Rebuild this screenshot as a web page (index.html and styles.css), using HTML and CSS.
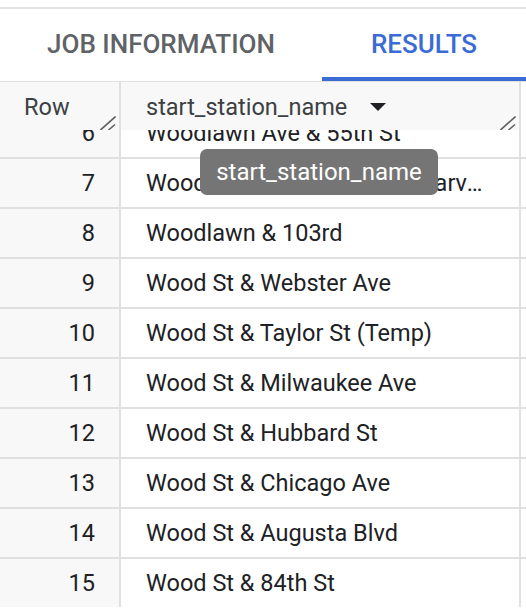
FILE: index.html
```html
<!DOCTYPE html>
<html lang="en">
<head>
<meta charset="utf-8">
<title>Results</title>
<link rel="stylesheet" href="styles.css">
</head>
<body>
<div class="page">
  <div class="topline"></div>
  <nav class="tabs">
    <div class="tab">Job information</div>
    <div class="tab active">Results</div>
  </nav>
  <div class="grid">
    <div class="head">
      <div class="hcell num-col">Row
        <svg class="resize" width="16" height="14" viewBox="0 0 16 14"><line x1="0.5" y1="14" x2="15.5" y2="0.5"/><line x1="8.5" y1="14" x2="15" y2="8.5"/></svg>
      </div>
      <div class="hcell name-col">
        <span>start_station_name</span>
        <svg class="sort" width="16" height="8" viewBox="0 0 16 8"><polygon points="0,0 16,0 8,8"/></svg>
        <svg class="resize" width="16" height="14" viewBox="0 0 16 14"><line x1="0.5" y1="14" x2="15.5" y2="0.5"/><line x1="8.5" y1="14" x2="15" y2="8.5"/></svg>
      </div>
    </div>
    <div class="body">
      <div class="rows">
        <div class="row"><div class="cell num-col">6</div><div class="cell name-col">Woodlawn Ave &amp; 55th St</div></div>
        <div class="row"><div class="cell num-col">7</div><div class="cell name-col">Woodlawn &amp; 103rd - Olive Harvey Vaccination Site</div></div>
        <div class="row"><div class="cell num-col">8</div><div class="cell name-col">Woodlawn &amp; 103rd</div></div>
        <div class="row"><div class="cell num-col">9</div><div class="cell name-col">Wood St &amp; Webster Ave</div></div>
        <div class="row"><div class="cell num-col">10</div><div class="cell name-col">Wood St &amp; Taylor St (Temp)</div></div>
        <div class="row"><div class="cell num-col">11</div><div class="cell name-col">Wood St &amp; Milwaukee Ave</div></div>
        <div class="row"><div class="cell num-col">12</div><div class="cell name-col">Wood St &amp; Hubbard St</div></div>
        <div class="row"><div class="cell num-col">13</div><div class="cell name-col">Wood St &amp; Chicago Ave</div></div>
        <div class="row"><div class="cell num-col">14</div><div class="cell name-col">Wood St &amp; Augusta Blvd</div></div>
        <div class="row"><div class="cell num-col">15</div><div class="cell name-col">Wood St &amp; 84th St</div></div>
      </div>
    </div>
  </div>
  <div class="tooltip">start_station_name</div>
</div>
</body>
</html>
```
FILE: styles.css
```css
html, body {
  margin: 0;
  padding: 0;
  background: #ffffff;
}
body {
  font-family: Roboto, "Liberation Sans", Arial, sans-serif;
  color: #202124;
  width: 526px;
  height: 608px;
  overflow: hidden;
}
.page {
  position: relative;
  width: 526px;
  height: 608px;
  overflow: hidden;
}
.topline {
  height: 7px;
  border-bottom: 2px solid #e3e3e3;
}
.tabs {
  display: flex;
  height: 72px;
  border-bottom: 1px solid #e0e0e0;
}
.tab {
  box-sizing: border-box;
  width: 322px;
  display: flex;
  align-items: center;
  justify-content: center;
  padding-top: 1px;
  font-size: 26px;
  font-weight: 500;
  text-transform: uppercase;
  color: #5f6368;
  border-bottom: 4px solid transparent;
}
.tab.active {
  width: 204px;
  color: #3b6bd5;
  border-bottom-color: #3b6bd5;
}
.grid {
  display: flex;
  flex-direction: column;
  height: 526px;
}
.head {
  display: flex;
  height: 48px;
  flex: none;
  position: relative;
  z-index: 1;
}
.hcell {
  position: relative;
  box-sizing: border-box;
  display: flex;
  align-items: center;
  background: #f8f8f8;
  border-right: 2px solid #e0e0e0;
  font-size: 23.5px;
  color: #3c4043;
  padding-top: 1px;
}
.num-col {
  width: 121px;
  flex: none;
}
.name-col {
  width: 400px;
  flex: none;
}
.hcell.num-col {
  padding-left: 24px;
}
.hcell.name-col {
  padding-left: 25px;
}
.sort {
  margin-left: 23px;
  fill: #202124;
}
.resize {
  position: absolute;
  right: 3px;
  bottom: 0;
  stroke: #616161;
  stroke-width: 1.6;
}
.body {
  flex: 1;
  overflow: hidden;
}
.rows {
  margin-top: -23px;
}
.row {
  display: flex;
  height: 50px;
  box-sizing: border-box;
  border-top: 2px solid #e0e0e0;
}
.cell {
  box-sizing: border-box;
  display: flex;
  align-items: center;
  border-right: 2px solid #e0e0e0;
  font-size: 23.5px;
  color: #202124;
  white-space: nowrap;
  overflow: hidden;
}
.cell.num-col {
  justify-content: flex-end;
  padding-right: 24px;
  background: #f8f8f8;
}
.cell.name-col {
  display: block;
  line-height: 48px;
  padding: 0 28px 0 25px;
  text-overflow: ellipsis;
  background: #ffffff;
}
.tooltip {
  position: absolute;
  left: 200px;
  top: 149px;
  width: 238px;
  height: 46px;
  box-sizing: border-box;
  border-radius: 7px;
  background: #757575;
  color: #ffffff;
  font-size: 24px;
  display: flex;
  align-items: center;
  justify-content: center;
  z-index: 2;
}
```
